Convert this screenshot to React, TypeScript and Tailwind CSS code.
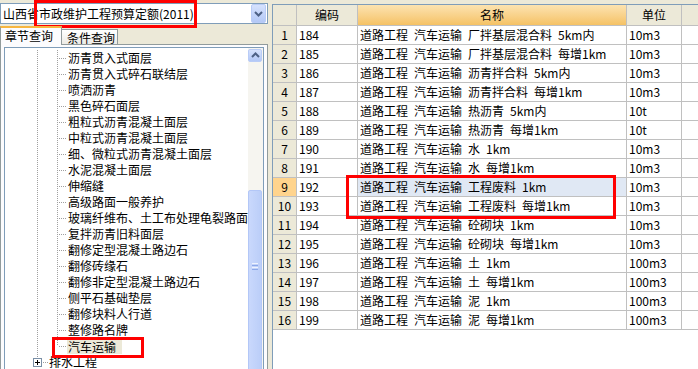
import React from "react";

const treeItems = [
  "沥青贯入式面层",
  "沥青贯入式碎石联结层",
  "喷洒沥青",
  "黑色碎石面层",
  "粗粒式沥青混凝土面层",
  "中粒式沥青混凝土面层",
  "细、微粒式沥青混凝土面层",
  "水泥混凝土面层",
  "伸缩缝",
  "高级路面一般养护",
  "玻璃纤维布、土工布处理龟裂路面",
  "复拌沥青旧料面层",
  "翻修定型混凝土路边石",
  "翻修砖缘石",
  "翻修非定型混凝土路边石",
  "侧平石基础垫层",
  "翻修块料人行道",
  "整修路名牌",
  "汽车运输",
];

const rows: [string, string, string][] = [
  ["184", "道路工程 汽车运输 厂拌基层混合料 5km内", "10m3"],
  ["185", "道路工程 汽车运输 厂拌基层混合料 每增1km", "10m3"],
  ["186", "道路工程 汽车运输 沥青拌合料 5km内", "10m3"],
  ["187", "道路工程 汽车运输 沥青拌合料 每增1km", "10m3"],
  ["188", "道路工程 汽车运输 热沥青 5km内", "10t"],
  ["189", "道路工程 汽车运输 热沥青 每增1km", "10t"],
  ["190", "道路工程 汽车运输 水 1km", "10m3"],
  ["191", "道路工程 汽车运输 水 每增1km", "10m3"],
  ["192", "道路工程 汽车运输 工程废料 1km", "10m3"],
  ["193", "道路工程 汽车运输 工程废料 每增1km", "10m3"],
  ["194", "道路工程 汽车运输 砼砌块 1km", "10m3"],
  ["195", "道路工程 汽车运输 砼砌块 每增1km", "10m3"],
  ["196", "道路工程 汽车运输 土 1km", "100m3"],
  ["197", "道路工程 汽车运输 土 每增1km", "100m3"],
  ["198", "道路工程 汽车运输 泥 1km", "100m3"],
  ["199", "道路工程 汽车运输 泥 每增1km", "100m3"],
];

function Connector({ last }: { last: boolean }) {
  return (
    <svg width="62" height="16" className="shrink-0">
      <line x1="32.5" y1="0" x2="32.5" y2="16" stroke="#A0A0A0" strokeDasharray="1 1" />
      <line x1="52.5" y1="0" x2="52.5" y2={last ? 8 : 16} stroke="#A0A0A0" strokeDasharray="1 1" />
      <line x1="54" y1="8.5" x2="62" y2="8.5" stroke="#A0A0A0" strokeDasharray="1 1" />
    </svg>
  );
}

function Chevron({ up }: { up?: boolean }) {
  return (
    <svg width="9" height="6" viewBox="0 0 9 6">
      <polyline
        points={up ? "1,5 4.5,1.5 8,5" : "1,1 4.5,4.5 8,1"}
        fill="none"
        stroke="#4D6185"
        strokeWidth="2"
      />
    </svg>
  );
}

export default function App() {
  return (
    <div className="relative flex h-[369px] w-[698px] overflow-hidden bg-[#ECE9D8] text-[12px] text-black font-[family-name:'Noto_Sans_CJK_SC',sans-serif]">
      {/* left pane */}
      <div className="flex w-[268px] shrink-0 flex-col">
        <div className="mt-[3px] flex h-[23px] items-center border border-[#7F9DB9] bg-white">
          <span className="flex-1 whitespace-nowrap pl-[2px] leading-[16px]">山西省市政维护工程预算定额(2011)</span>
          <div className="mr-px flex h-[19px] w-[15px] items-center justify-center rounded-[2px] border border-[#B9CCF7] bg-linear-to-b from-[#D6E2FD] to-[#B3C8F6]">
            <Chevron />
          </div>
        </div>

        <div className="mt-[2px] flex h-[18px] items-end">
          <div className="relative z-10 -mb-px h-[19px] w-[62px] border border-b-0 border-[#919B9C] border-t-2 border-t-[#F7B640] bg-[#FCFCFE] pl-[4px] leading-[15px]">
            章节查询
          </div>
          <div className="h-[15px] w-[56px] border border-b-0 border-l-0 border-[#919B9C] bg-linear-to-b from-[#FFFFFF] to-[#ECEBE6] pl-[5px] leading-[15px]">
            条件查询
          </div>
        </div>

        <div className="h-[340px] shrink-0 border border-[#919B9C] bg-[#FCFCFE] px-[3px] pt-[2px]">
          <div className="flex h-full border border-[#7F9DB9] bg-white">
            <div className="flex-1 overflow-hidden pt-[2px]">
              {treeItems.map((t, i) => {
                const last = i === treeItems.length - 1;
                return (
                  <div key={t} className="flex h-[16px] items-center whitespace-nowrap">
                    <Connector last={last} />
                    {last ? (
                      <span className="bg-[#ECE9D8] pl-px pr-[6px] leading-[15px]">{t}</span>
                    ) : (
                      <span className="pl-px leading-[16px]">{t}</span>
                    )}
                  </div>
                );
              })}
              <div className="flex h-[16px] items-center whitespace-nowrap">
                <svg width="43" height="16" className="shrink-0">
                  <line x1="32.5" y1="0" x2="32.5" y2="4" stroke="#A0A0A0" strokeDasharray="1 1" />
                  <rect x="28.5" y="4.5" width="8" height="8" fill="white" stroke="#7A8FA6" />
                  <line x1="30" y1="8.5" x2="35" y2="8.5" stroke="#000" />
                  <line x1="32.5" y1="6" x2="32.5" y2="11" stroke="#000" />
                  <line x1="38" y1="8.5" x2="43" y2="8.5" stroke="#A0A0A0" strokeDasharray="1 1" />
                </svg>
                <span className="pl-px leading-[16px]">排水工程</span>
              </div>
            </div>

            {/* scrollbar */}
            <div className="flex w-[15px] shrink-0 flex-col bg-[#F6F5F0]">
              <div className="mt-px flex h-[15px] w-[14px] items-center justify-center rounded-[2px] border border-[#B9CCF7] bg-linear-to-b from-[#D6E2FD] to-[#B3C8F6]">
                <Chevron up />
              </div>
              <div className="h-[158px]" />
              <div className="flex h-[220px] w-[14px] flex-col items-center rounded-t-[2px] border border-[#B3C7F7] bg-linear-to-r from-[#C9D8FC] to-[#BBCEF8] pt-[72px]">
                <div className="flex flex-col gap-px">
                  <div className="h-px w-[6px] bg-[#EEF3FE]" />
                  <div className="h-px w-[6px] bg-[#8CA8E8]" />
                  <div className="h-px w-[6px] bg-[#EEF3FE]" />
                  <div className="h-px w-[6px] bg-[#8CA8E8]" />
                </div>
              </div>
            </div>
          </div>
        </div>
      </div>

      {/* right table */}
      <div className="ml-[4px] mt-[4px] flex flex-1 flex-col border-l border-t border-[#7F9DB9] bg-white">
        <div className="flex h-[21px] shrink-0 border-b border-[#C0C0C0] bg-[#ECE9D8] leading-[20px]">
          <div className="w-[24px] shrink-0 border-r border-[#C0C0C0]" />
          <div className="w-[61px] shrink-0 border-r border-[#C0C0C0] text-center">编码</div>
          <div className="w-[269px] shrink-0 border-r border-[#C0C0C0] bg-linear-to-b from-[#FCE3B0] to-[#F5C264] text-center">
            名称
          </div>
          <div className="w-[55px] shrink-0 border-r border-[#C0C0C0] text-center">单位</div>
          <div className="flex-1" />
        </div>
        {rows.map(([code, name, unit], i) => (
          <div key={code} className="flex h-[19px] shrink-0 border-b border-[#C0C0C0] leading-[18px]">
            <div
              className={`w-[24px] shrink-0 border-r border-[#C0C0C0] text-center ${
                i === 8 ? "bg-[#FFD48D]" : "bg-[#ECE9D8]"
              }`}
            >
              {i + 1}
            </div>
            <div className="w-[61px] shrink-0 border-r border-[#C0C0C0] pl-[2px]">{code}</div>
            <div
              className={`flex w-[269px] shrink-0 gap-[6px] whitespace-nowrap border-r border-[#C0C0C0] pl-[2px] ${
                i === 8 ? "bg-[#E0E8F4]" : ""
              }`}
            >
              {name.split(" ").map((w, j) => (
                <span key={j}>{w}</span>
              ))}
            </div>
            <div className="w-[55px] shrink-0 border-r border-[#C0C0C0] pl-[2px]">{unit}</div>
            <div className="flex-1" />
          </div>
        ))}
      </div>

      {/* red annotation boxes */}
      <div className="pointer-events-none absolute left-[34px] top-0 h-[28px] w-[163px] border-[3px] border-[#FF0000]" />
      <div className="pointer-events-none absolute left-[52px] top-[337px] h-[21px] w-[92px] border-[3px] border-[#FF0000]" />
      <div className="pointer-events-none absolute left-[346px] top-[175px] h-[44px] w-[270px] border-[3px] border-[#FF0000]" />
    </div>
  );
}
